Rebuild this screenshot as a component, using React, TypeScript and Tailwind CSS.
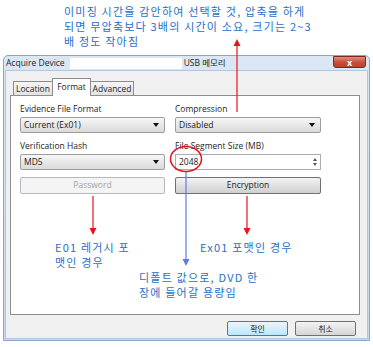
import React from 'react'

const ui = "font-['Open_Sans','Noto_Sans_CJK_KR',sans-serif]"
const note = "font-['Noto_Sans_CJK_KR',sans-serif] text-[#1f6fc9] text-[11px] leading-[15px] tracking-[1.2px] whitespace-nowrap"

const Caret = () => (
    <svg width="6" height="4" viewBox="0 0 6 4" className="shrink-0">
        <path d="M0 0 L6 0 L3 4 Z" fill="#111" />
    </svg>
)

const Dropdown = ({ value }: { value: string }) => (
    <div className="mt-[2px] h-[16px] flex items-center justify-between pl-[3px] pr-[5px] border border-[#9d9d9d] rounded-[2px] bg-gradient-to-b from-[#f7f7f7] to-[#dadada] text-[8.5px] text-[#1a1a1a]">
        <span>{value}</span>
        <Caret />
    </div>
)

const Label = ({ children }: { children: React.ReactNode }) => (
    <div className="h-[13px] leading-[13px] text-[8.5px] text-[#1e1e1e]">{children}</div>
)

const App = () => {
    return (
        <div className={`relative w-[373px] h-[347px] bg-white overflow-hidden ${ui}`}>
            {/* top note */}
            <div className={`h-[55px] pl-[64px] pt-[4px] ${note}`}>
                <div>이미징 시간을 감안하여 선택할 것, 압축을 하게</div>
                <div>되면 무압축보다 3배의 시간이 소요, 크기는 2~3</div>
                <div>배 정도 작아짐</div>
            </div>

            {/* dialog */}
            <div className="ml-[3px] w-[367px] h-[286px] flex flex-col border border-[#8aa5c9] rounded-t-[5px] bg-gradient-to-b from-[#dbe7f5] to-[#c7d9ef]">
                <div className="h-[14px] flex items-center pl-[2px] text-[8.5px] text-[#1e1e1e]">
                    <span>Acquire Device</span>
                    <div className="ml-[5px] w-[112px] h-[11px] bg-white"></div>
                    <span className="ml-[2px]">USB 메모리</span>
                    <div className="ml-auto mr-[3px] self-start w-[33px] h-[12px] rounded-b-[3px] border border-[#7a2a22] bg-gradient-to-b from-[#e08c7e] via-[#c8503f] to-[#b8412f] flex items-center justify-center text-white text-[9px] leading-none font-bold">
                        x
                    </div>
                </div>

                <div className="flex-1 mx-[1px] mb-[1px] bg-[#f0f0f0] border border-[#b4c6dd] px-[4px] pt-[7px] flex flex-col">
                    {/* tabs */}
                    <div className="flex items-end h-[18px] pl-[3px] text-[8.5px] text-[#1e1e1e]">
                        <div className="w-[40px] h-[15px] flex items-center justify-center border border-[#8d8d8d] border-b-0 bg-gradient-to-b from-[#f5f5f5] to-[#e1e1e1]">Location</div>
                        <div className="relative z-10 w-[39px] h-[18px] -ml-px flex items-start pt-[2px] justify-center border border-[#8d8d8d] border-b-0 bg-white">Format</div>
                        <div className="w-[44px] h-[15px] -ml-px flex items-center justify-center border border-[#8d8d8d] border-b-0 bg-gradient-to-b from-[#f5f5f5] to-[#e1e1e1]">Advanced</div>
                    </div>

                    {/* panel */}
                    <div className="-mt-px w-[350px] h-[220px] border border-[#8d8d8d] bg-white pl-[9px] pt-[6px]">
                        <div className="grid grid-cols-[145px_146px] gap-x-[10px] gap-y-[6px]">
                            <div>
                                <Label>Evidence File Format</Label>
                                <Dropdown value="Current (Ex01)" />
                            </div>
                            <div>
                                <Label>Compression</Label>
                                <Dropdown value="Disabled" />
                            </div>
                            <div>
                                <Label>Verification Hash</Label>
                                <Dropdown value="MD5" />
                            </div>
                            <div>
                                <Label>File Segment Size (MB)</Label>
                                <div className="mt-[2px] h-[16px] flex items-center justify-between pl-[3px] pr-[3px] border border-[#abadb3] bg-white text-[8.5px] text-[#1a1a1a]">
                                    <span>2048</span>
                                    <div className="flex flex-col gap-[2px]">
                                        <svg width="4" height="3" viewBox="0 0 4 3"><path d="M0 3 L4 3 L2 0 Z" fill="#555" /></svg>
                                        <svg width="4" height="3" viewBox="0 0 4 3"><path d="M0 0 L4 0 L2 3 Z" fill="#555" /></svg>
                                    </div>
                                </div>
                            </div>
                        </div>
                        <div className="mt-[7px] grid grid-cols-[145px_146px] gap-x-[10px]">
                            <div className="h-[17px] flex items-center justify-center border border-[#b5b9bd] rounded-[2px] bg-[#f4f4f4] text-[8.5px] text-[#a3a3a3]">Password</div>
                            <div className="h-[17px] flex items-center justify-center border border-[#707070] rounded-[2px] bg-gradient-to-b from-[#f3f3f3] to-[#d0d0d0] text-[8.5px] text-[#1a1a1a]">Encryption</div>
                        </div>
                    </div>

                    {/* dialog buttons */}
                    <div className="mt-[6px] flex justify-end gap-[7px] pr-[7px] text-[8px] text-[#1e1e1e]">
                        <div className="w-[61px] h-[15px] flex items-center justify-center border border-[#3c7fb1] rounded-[2px] bg-gradient-to-b from-[#eaf6fd] to-[#bee6fd]">확인</div>
                        <div className="w-[61px] h-[15px] flex items-center justify-center border border-[#707070] rounded-[2px] bg-gradient-to-b from-[#f3f3f3] to-[#d5d5d5]">취소</div>
                    </div>
                </div>
            </div>

            {/* annotation overlay */}
            <svg className="absolute inset-0 pointer-events-none" width="373" height="347" viewBox="0 0 373 347">
                <line x1="237" y1="44" x2="237" y2="112" stroke="#e8141c" strokeWidth="1.2" />
                <path d="M237 39 L233.5 46 L240.5 46 Z" fill="#e8141c" />
                <line x1="93" y1="196" x2="93" y2="230" stroke="#e8141c" strokeWidth="1.2" />
                <path d="M93 235 L89.5 228 L96.5 228 Z" fill="#e8141c" />
                <line x1="247" y1="196" x2="247" y2="230" stroke="#e8141c" strokeWidth="1.2" />
                <path d="M247 235 L243.5 228 L250.5 228 Z" fill="#e8141c" />
                <line x1="186" y1="172" x2="186" y2="261" stroke="#5b7fe0" strokeWidth="1.2" />
                <path d="M186 266 L182.5 259 L189.5 259 Z" fill="#5b7fe0" />
                <ellipse cx="186" cy="159" rx="15.5" ry="12.5" fill="none" stroke="#e8141c" strokeWidth="1.5" />
            </svg>

            <div className={`absolute left-[55px] top-[240px] ${note}`}>
                <div>E01 레거시 포</div>
                <div>맷인 경우</div>
            </div>
            <div className={`absolute left-[200px] top-[240px] ${note}`}>
                Ex01 포맷인 경우
            </div>
            <div className={`absolute left-[139px] top-[270px] ${note}`}>
                <div>디폴트 값으로, DVD 한</div>
                <div>장에 들어갈 용량임</div>
            </div>
        </div>
    )
}

export default App
